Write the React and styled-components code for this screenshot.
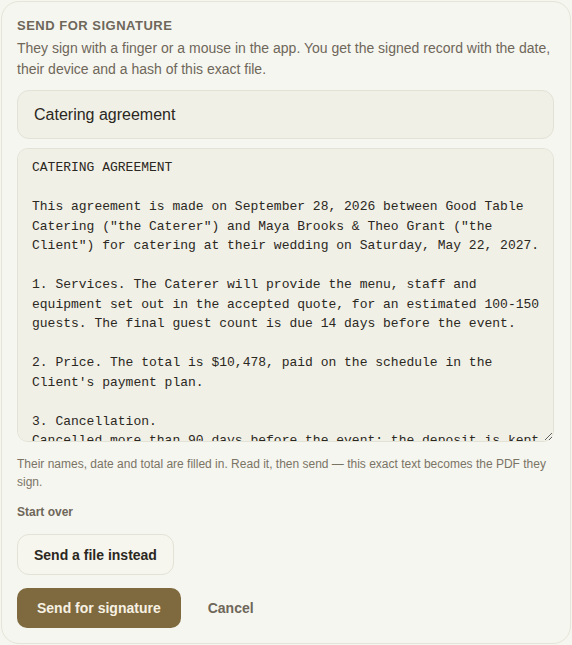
import styled, { createGlobalStyle } from "styled-components";

const contractText = `CATERING AGREEMENT

This agreement is made on September 28, 2026 between Good Table Catering ("the Caterer") and Maya Brooks & Theo Grant ("the Client") for catering at their wedding on Saturday, May 22, 2027.

1. Services. The Caterer will provide the menu, staff and equipment set out in the accepted quote, for an estimated 100-150 guests. The final guest count is due 14 days before the event.

2. Price. The total is $10,478, paid on the schedule in the Client's payment plan.

3. Cancellation.
Cancelled more than 90 days before the event: the deposit is kept and any later payments are refunded.
Cancelled within 90 days of the event: 50% of the total is due.
Cancelled within 14 days of the event: the full total is due.

4. Signatures. Both parties agree to the terms above.`;

const GlobalStyle = createGlobalStyle`
  html, body {
    margin: 0;
    padding: 0;
    background: #f6f6f0;
  }
  body {
    font-family: "Liberation Sans", Arial, sans-serif;
  }
  * {
    box-sizing: border-box;
  }
`;

export default function App() {
  return (
    <>
      <GlobalStyle />
      <Page>
        <Card>
          <Heading>Send for signature</Heading>
          <Intro>
            They sign with a finger or a mouse in the app. You get the signed
            record with the date, their device and a hash of this exact file.
          </Intro>
          <TitleInput defaultValue="Catering agreement" />
          <Contract defaultValue={contractText} spellCheck={false} />
          <Hint>
            Their names, date and total are filled in. Read it, then send — this
            exact text becomes the PDF they sign.
          </Hint>
          <SmallLabel>Start over</SmallLabel>
          <div>
            <GhostButton>Send a file instead</GhostButton>
          </div>
          <Actions>
            <PrimaryButton>Send for signature</PrimaryButton>
            <TextButton>Cancel</TextButton>
          </Actions>
        </Card>
      </Page>
    </>
  );
}

const Page = styled.div`
  padding: 1px;
`;

const Card = styled.div`
  display: flex;
  flex-direction: column;
  height: 643px;
  padding: 16px 16px 15px 15px;
  background: #f6f6f0;
  border: 1px solid #e4e4d8;
  border-radius: 18px;
`;

const Heading = styled.h2`
  margin: 0;
  font-size: 13px;
  line-height: 16px;
  font-weight: 700;
  letter-spacing: 0.5px;
  text-transform: uppercase;
  color: #6e675a;
`;

const Intro = styled.p`
  margin: 4px 0 0;
  font-size: 14px;
  line-height: 21px;
  color: #6e675a;
`;

const TitleInput = styled.input`
  display: block;
  width: 100%;
  margin-top: 10px;
  padding: 14px 16px;
  font-family: "Liberation Sans", Arial, sans-serif;
  font-size: 16px;
  line-height: 19px;
  color: #2b2721;
  background: #f0f0e7;
  border: 1px solid #e2e2d6;
  border-radius: 12px;
  outline: none;
`;

const Contract = styled.textarea`
  display: block;
  width: 100%;
  height: 294px;
  margin-top: 9px;
  padding: 9px 12px 8px 14px;
  font-family: "Liberation Mono", "Courier New", monospace;
  font-size: 13px;
  line-height: 19.5px;
  color: #2b2721;
  background: #f0f0e7;
  border: 1px solid #e2e2d6;
  border-radius: 11px;
  outline: none;
  resize: vertical;
  scrollbar-width: none;
`;

const Hint = styled.p`
  margin: 13px 0 0;
  font-size: 12px;
  line-height: 18px;
  color: #7a7465;
`;

const SmallLabel = styled.div`
  margin-top: 12px;
  font-size: 12px;
  line-height: 18px;
  font-weight: 700;
  color: #6e675a;
`;

const GhostButton = styled.button`
  margin-top: 13px;
  height: 41px;
  padding: 0 16px;
  font-family: "Liberation Sans", Arial, sans-serif;
  font-size: 14px;
  font-weight: 700;
  color: #2b2721;
  background: #f6f6ef;
  border: 1px solid #e2e2d6;
  border-radius: 12px;
  cursor: pointer;
`;

const Actions = styled.div`
  display: flex;
  align-items: center;
  gap: 8px;
  margin-top: 13px;
`;

const PrimaryButton = styled.button`
  height: 40px;
  padding: 0 20px;
  font-family: "Liberation Sans", Arial, sans-serif;
  font-size: 14px;
  font-weight: 700;
  color: #f7f1e3;
  background: #7f6a3f;
  border: none;
  border-radius: 10px;
  cursor: pointer;
`;

const TextButton = styled.button`
  height: 40px;
  padding: 0 19px;
  font-family: "Liberation Sans", Arial, sans-serif;
  font-size: 14px;
  font-weight: 700;
  color: #6e675a;
  background: transparent;
  border: none;
  cursor: pointer;
`;
